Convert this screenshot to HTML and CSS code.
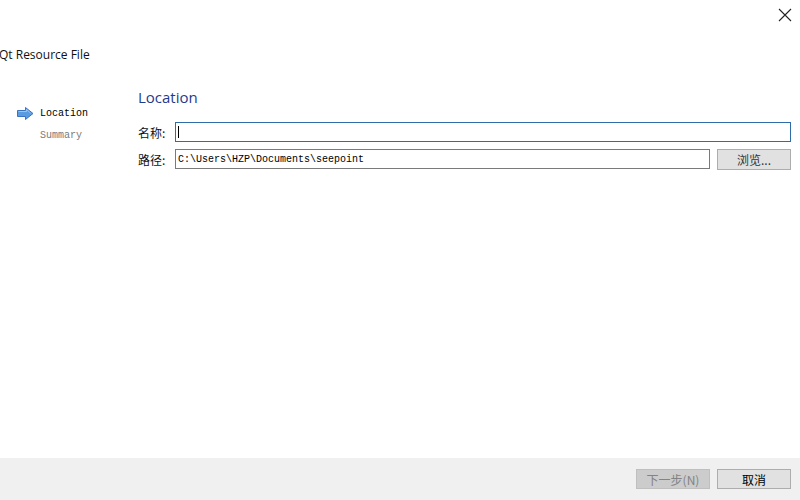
FILE: index.html
```html
<!DOCTYPE html>
<html>
<head>
<meta charset="utf-8">
<link rel="stylesheet" href="styles.css">
</head>
<body>
<div class="dialog">
  <div class="titlebar">
    <svg class="close" width="14" height="14" viewBox="0 0 14 14"><path d="M1 1 L13 13 M13 1 L1 13" stroke="#222" stroke-width="1.1" fill="none"/></svg>
  </div>
  <div class="wtitle">Qt Resource File</div>
  <div class="main">
    <div class="side">
      <div class="step active">
        <svg class="arrow" width="17" height="13" viewBox="0 0 17 13"><path d="M0.5 3.5 H8.5 V0.5 L16 6.5 L8.5 12.5 V9.5 H0.5 Z" fill="#5b9be0" stroke="#3a74c0" stroke-width="1"/><path d="M1.5 4.5 H9.5 V2.5 L13.5 6" fill="none" stroke="#9cc6f2" stroke-width="1"/></svg>
        <span>Location</span>
      </div>
      <div class="step"><span>Summary</span></div>
    </div>
    <div class="content">
      <div class="heading">Location</div>
      <div class="row">
        <label class="lbl">名称:</label>
        <div class="input focus"><span class="caret"></span></div>
      </div>
      <div class="row">
        <label class="lbl">路径:</label>
        <div class="input path">C:\Users\HZP\Documents\seepoint</div>
        <div class="btn browse">浏览...</div>
      </div>
    </div>
  </div>
  <div class="footer">
    <div class="btn disabled">下一步(N)</div>
    <div class="btn">取消</div>
  </div>
</div>
</body>
</html>
```
FILE: styles.css
```css
html, body {
  margin: 0;
  padding: 0;
  background: #fff;
}
.dialog {
  width: 800px;
  height: 500px;
  display: flex;
  flex-direction: column;
  font-family: "Noto Sans CJK SC", "Noto Sans", sans-serif;
  font-size: 12px;
  color: #000;
}
.titlebar {
  height: 30px;
  display: flex;
  justify-content: flex-end;
  align-items: flex-start;
}
.close {
  margin: 8px 8px 0 0;
}
.wtitle {
  font-family: "Open Sans", "Noto Sans", sans-serif;
  font-size: 12px;
  height: 20px;
  line-height: 20px;
  margin-top: 15px;
  margin-left: -1px;
  color: #111;
}
.main {
  flex: 1;
  display: flex;
  padding-top: 21px;
}
.side {
  width: 138px;
  padding-top: 16px;
  font-family: "Liberation Mono", monospace;
  font-size: 10px;
}
.step {
  display: flex;
  align-items: center;
  height: 22px;
  padding-left: 40px;
  color: #7a7a7a;
  position: relative;
}
.step.active {
  color: #000;
}
.arrow {
  position: absolute;
  left: 17px;
  top: 5px;
}
.content {
  flex: 1;
  padding-right: 9px;
}
.heading {
  font-family: "Open Sans", "Noto Sans", sans-serif;
  font-size: 15px;
  color: #1f3b8c;
  height: 22px;
  line-height: 22px;
  margin-bottom: 14px;
}
.row {
  display: flex;
  align-items: center;
  height: 20px;
  margin-bottom: 7px;
}
.lbl {
  width: 37px;
  font-size: 12px;
  color: #111;
}
.input {
  flex: 1;
  height: 18px;
  border: 1px solid #7a7a7a;
  background: #fff;
  display: flex;
  align-items: center;
  padding-left: 2px;
  font-family: "Liberation Mono", monospace;
  font-size: 10px;
}
.input.focus {
  border-color: #2f6da8;
}
.caret {
  width: 1px;
  height: 12px;
  background: #000;
}
.input.path {
  margin-right: 7px;
}
.btn {
  width: 72px;
  height: 18px;
  border: 1px solid #adadad;
  background: #e1e1e1;
  display: flex;
  align-items: center;
  justify-content: center;
  font-size: 12px;
  color: #000;
}
.browse {
  height: 19px;
  color: #333;
}
.footer {
  height: 42px;
  background: #f0f0f0;
  display: flex;
  justify-content: flex-end;
  align-items: center;
  gap: 7px;
  padding-right: 9px;
  padding-top: 0;
}
.btn.disabled {
  background: #cccccc;
  border-color: #bfbfbf;
  color: #838383;
}
```
